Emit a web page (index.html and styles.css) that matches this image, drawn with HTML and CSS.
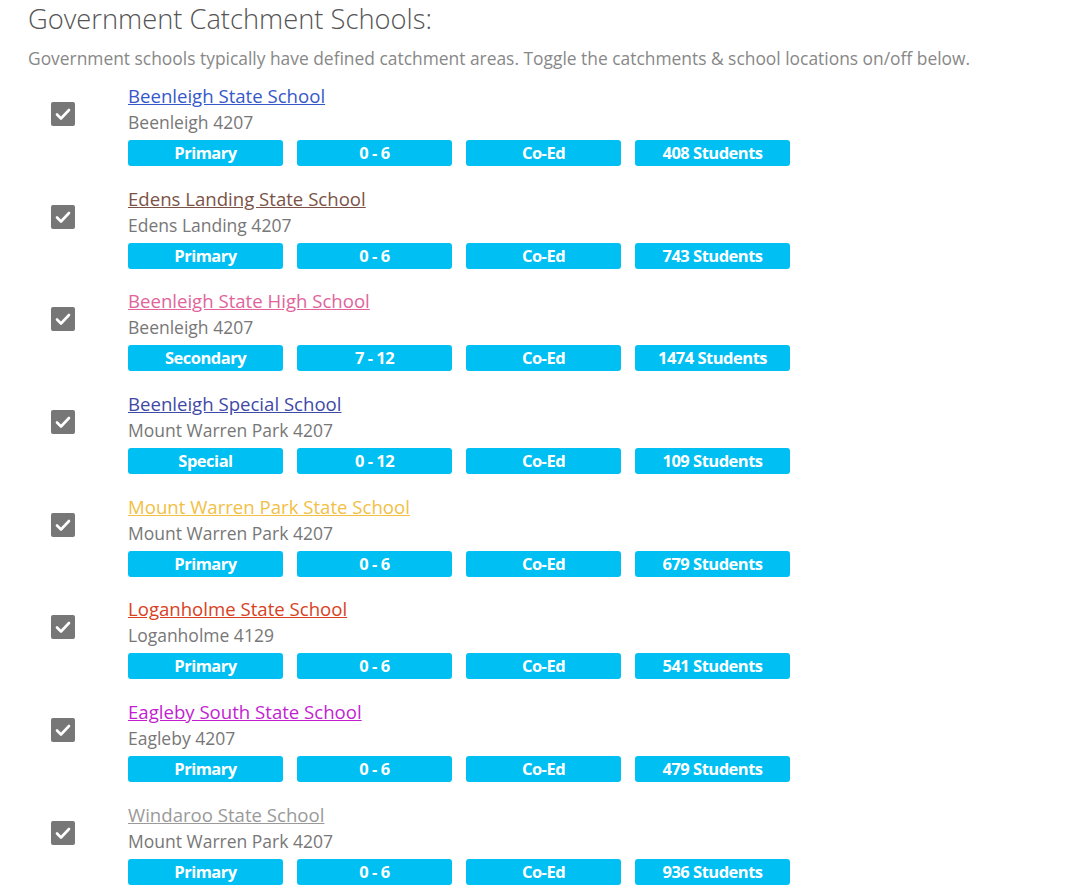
FILE: index.html
```html
<!DOCTYPE html>
<html>
<head>
<meta charset="utf-8">
<link rel="stylesheet" href="styles.css">
</head>
<body>
<div class="page">
  <h2 class="title">Government Catchment Schools:</h2>
  <p class="intro">Government schools typically have defined catchment areas. Toggle the catchments &amp; school locations on/off below.</p>
  <ul class="schools">
    <li class="school">
      <span class="check"><svg viewBox="0 0 24 24" width="24" height="24"><path d="M6 12.5l4 4 8-8.5" fill="none" stroke="#fff" stroke-width="2.6" stroke-linecap="round" stroke-linejoin="round"/></svg></span>
      <div class="info">
        <a href="#" class="name c1">Beenleigh State School</a>
        <div class="addr">Beenleigh 4207</div>
        <div class="tags"><span class="tag">Primary</span><span class="tag">0 - 6</span><span class="tag">Co-Ed</span><span class="tag">408 Students</span></div>
      </div>
    </li>
    <li class="school">
      <span class="check"><svg viewBox="0 0 24 24" width="24" height="24"><path d="M6 12.5l4 4 8-8.5" fill="none" stroke="#fff" stroke-width="2.6" stroke-linecap="round" stroke-linejoin="round"/></svg></span>
      <div class="info">
        <a href="#" class="name c2">Edens Landing State School</a>
        <div class="addr">Edens Landing 4207</div>
        <div class="tags"><span class="tag">Primary</span><span class="tag">0 - 6</span><span class="tag">Co-Ed</span><span class="tag">743 Students</span></div>
      </div>
    </li>
    <li class="school">
      <span class="check"><svg viewBox="0 0 24 24" width="24" height="24"><path d="M6 12.5l4 4 8-8.5" fill="none" stroke="#fff" stroke-width="2.6" stroke-linecap="round" stroke-linejoin="round"/></svg></span>
      <div class="info">
        <a href="#" class="name c3">Beenleigh State High School</a>
        <div class="addr">Beenleigh 4207</div>
        <div class="tags"><span class="tag">Secondary</span><span class="tag">7 - 12</span><span class="tag">Co-Ed</span><span class="tag">1474 Students</span></div>
      </div>
    </li>
    <li class="school">
      <span class="check"><svg viewBox="0 0 24 24" width="24" height="24"><path d="M6 12.5l4 4 8-8.5" fill="none" stroke="#fff" stroke-width="2.6" stroke-linecap="round" stroke-linejoin="round"/></svg></span>
      <div class="info">
        <a href="#" class="name c4">Beenleigh Special School</a>
        <div class="addr">Mount Warren Park 4207</div>
        <div class="tags"><span class="tag">Special</span><span class="tag">0 - 12</span><span class="tag">Co-Ed</span><span class="tag">109 Students</span></div>
      </div>
    </li>
    <li class="school">
      <span class="check"><svg viewBox="0 0 24 24" width="24" height="24"><path d="M6 12.5l4 4 8-8.5" fill="none" stroke="#fff" stroke-width="2.6" stroke-linecap="round" stroke-linejoin="round"/></svg></span>
      <div class="info">
        <a href="#" class="name c5">Mount Warren Park State School</a>
        <div class="addr">Mount Warren Park 4207</div>
        <div class="tags"><span class="tag">Primary</span><span class="tag">0 - 6</span><span class="tag">Co-Ed</span><span class="tag">679 Students</span></div>
      </div>
    </li>
    <li class="school">
      <span class="check"><svg viewBox="0 0 24 24" width="24" height="24"><path d="M6 12.5l4 4 8-8.5" fill="none" stroke="#fff" stroke-width="2.6" stroke-linecap="round" stroke-linejoin="round"/></svg></span>
      <div class="info">
        <a href="#" class="name c6">Loganholme State School</a>
        <div class="addr">Loganholme 4129</div>
        <div class="tags"><span class="tag">Primary</span><span class="tag">0 - 6</span><span class="tag">Co-Ed</span><span class="tag">541 Students</span></div>
      </div>
    </li>
    <li class="school">
      <span class="check"><svg viewBox="0 0 24 24" width="24" height="24"><path d="M6 12.5l4 4 8-8.5" fill="none" stroke="#fff" stroke-width="2.6" stroke-linecap="round" stroke-linejoin="round"/></svg></span>
      <div class="info">
        <a href="#" class="name c7">Eagleby South State School</a>
        <div class="addr">Eagleby 4207</div>
        <div class="tags"><span class="tag">Primary</span><span class="tag">0 - 6</span><span class="tag">Co-Ed</span><span class="tag">479 Students</span></div>
      </div>
    </li>
    <li class="school">
      <span class="check"><svg viewBox="0 0 24 24" width="24" height="24"><path d="M6 12.5l4 4 8-8.5" fill="none" stroke="#fff" stroke-width="2.6" stroke-linecap="round" stroke-linejoin="round"/></svg></span>
      <div class="info">
        <a href="#" class="name c8">Windaroo State School</a>
        <div class="addr">Mount Warren Park 4207</div>
        <div class="tags"><span class="tag">Primary</span><span class="tag">0 - 6</span><span class="tag">Co-Ed</span><span class="tag">936 Students</span></div>
      </div>
    </li>
  </ul>
</div>
</body>
</html>
```

FILE: styles.css
```css
* { box-sizing: border-box; }
html, body { margin: 0; padding: 0; background: #fff; }
body { font-family: "Open Sans", "Liberation Sans", sans-serif; color: #777; }
.page { padding: 0 0 0 28px; }
.title {
  margin: 0;
  padding-top: 2px;
  font-size: 27.3px;
  font-weight: 300;
  line-height: 34px;
  color: #555;
}
.intro {
  margin: 10px 0 0;
  font-size: 17.4px;
  line-height: 24px;
  color: #888;
}
.schools { list-style: none; margin: 13px 0 0; padding: 0; }
.school { display: flex; align-items: flex-start; margin-bottom: 19.7px; }
.check {
  display: block;
  width: 24px; height: 24px;
  margin: 19px 53px 0 23px;
  background: #777;
  border-radius: 2px;
  flex: none;
}
.check svg { display: block; }
.info { display: flex; flex-direction: column; }
.name {
  font-size: 18.6px;
  line-height: 26px;
  text-decoration: underline;
  align-self: flex-start;
}
.addr { font-size: 17.5px; line-height: 26px; color: #777; }
.tags { display: flex; gap: 14px; margin-top: 5px; }
.tag {
  width: 155px; height: 26px;
  background: #00bff3;
  color: #fff;
  border-radius: 3px;
  font-size: 16.5px;
  font-weight: 700;
  letter-spacing: -0.5px;
  line-height: 26px;
  text-align: center;
}
.c1 { color: #3658c9; }
.c2 { color: #7b5346; }
.c3 { color: #e0649b; }
.c4 { color: #3f49a6; }
.c5 { color: #f2c044; }
.c6 { color: #d8411d; }
.c7 { color: #c21fd1; }
.c8 { color: #9a9a9a; }
```
